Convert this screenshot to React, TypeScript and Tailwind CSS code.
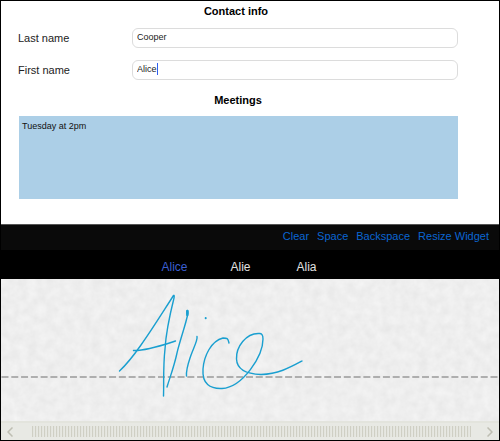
import { useState } from "react";

const font = "font-['Liberation_Sans',Arial,sans-serif]";
const actions = ["Clear", "Space", "Backspace", "Resize Widget"];
const candidates = ["Alice", "Alie", "Alia"];

function Field({ id, label, value, onChange, caret }: {
  id: string; label: string; value: string; onChange: (v: string) => void; caret?: boolean;
}) {
  return (
    <div className="flex h-5 items-center">
      <label htmlFor={id} className="w-[114px] shrink-0 text-[11px] leading-4 text-[#222]">{label}</label>
      <div className="relative h-5 min-w-0 flex-1">
        <input
          id={id}
          value={value}
          onChange={(e) => onChange(e.target.value)}
          className="block h-5 w-full rounded-[6px] border border-[#dcdcdc] bg-white px-1 pb-0.5 text-[9px] text-[#222] outline-none"
        />
        {caret && (
          <span className="pointer-events-none absolute left-[5px] top-[3px] flex h-3 text-[9px]">
            <span className="invisible">{value}</span>
            <span className="w-px bg-[#2f5ff0]" />
          </span>
        )}
      </div>
    </div>
  );
}

function Ink() {
  return (
    <svg viewBox="0 0 498 142" className="block h-[142px] w-full" role="img" aria-label="Handwritten Alice" preserveAspectRatio="xMidYMid slice">
      <filter id="paper" x="0" y="0" width="100%" height="100%" colorInterpolationFilters="sRGB">
        <feTurbulence type="fractalNoise" baseFrequency="0.11" numOctaves="3" seed="4" />
        <feColorMatrix values="0.06 0 0 0 0.904  0.06 0 0 0 0.904  0.06 0 0 0 0.904  0 0 0 0 1" />
      </filter>
      <rect width="498" height="142" fill="#eeeeee" filter="url(#paper)" />
      <path d="M0.5 98H498" stroke="#999" strokeWidth="1.5" strokeDasharray="7 2.78" />
      <g transform="translate(-1 -279)" fill="none" stroke="#199fd0" strokeWidth="1.4" strokeLinecap="round" strokeLinejoin="round">
        <path d="M119.500 371C127 364 134 355 141 345C151 331 161 315 170 301L173.500 295.500Q174.600 295 174 298C170 314 166 332 165 349C163 367 164 382 163.500 396" />
        <path d="M133.500 350.500C146 351 163 345 175.500 341" />
        <path d="M187 314V311.500Q188 309 188 313C186 324 180 340 177 353C174 367 170 377 167 387" />
        <path d="M187.300 311V315" strokeWidth="2.4" />
        <path d="M197 336.500C198 340 193 349 190 358Q186 370 186.500 376" />
        <path d="M205.700 318V318.300" strokeWidth="2" />
        <path d="M229 343C228 338 227 338 223 338C211 341 204 356 203 369C202 384 210 389 222 388.500C243 387 263 356 263 339Q263 333 259 333.500C246 333 236 347 236.500 359C237 370 246 374 261 374.500C278 374 289 368 302 361" />
      </g>
    </svg>
  );
}

function Chevron({ right }: { right?: boolean }) {
  return (
    <svg viewBox="0 0 6 10" className="h-2.5 w-1.5" fill="none" stroke="#bebeb2" strokeWidth="1.5">
      <path d={right ? "M0.500 0.500L5 5L0.500 9.500" : "M5.500 0.500L1 5L5.500 9.500"} />
    </svg>
  );
}

export default function App() {
  const [last, setLast] = useState("Cooper");
  const [first, setFirst] = useState("Alice");
  const [pick, setPick] = useState("Alice");
  return (
    <main className={`border border-black bg-white ${font}`}>
      <form className="flex flex-col pb-[25px] pl-[17px] pr-[41px]" onSubmit={(e) => e.preventDefault()}>
        <h2 className="pt-0.5 pr-1 text-center text-[11px] font-bold leading-4 text-black">Contact info</h2>
        <div className="flex flex-col gap-3 pt-[9px]">
          <Field id="last" label="Last name" value={last} onChange={setLast} />
          <Field id="first" label="First name" value={first} onChange={setFirst} caret />
        </div>
        <h2 className="pt-3 text-center text-[11px] font-bold leading-4 text-black">Meetings</h2>
        <textarea aria-label="Meetings" defaultValue="Tuesday at 2pm" className="ml-px mt-2 block h-[83px] resize-none bg-[#accfe7] px-[3px] py-[3px] text-[9px] leading-[14px] text-[#111] outline-none" />
      </form>
      <nav className="flex h-[26px] items-center justify-end gap-2 border-t border-[#555] bg-[#0a0a0a] pb-[3px] pr-2.5 text-[11px] leading-4 text-[#0a66d2]">
        {actions.map((a) => <button key={a} type="button">{a}</button>)}
      </nav>
      <div className="flex h-[29px] items-center justify-center bg-black pb-px pr-[19px] pt-1.5 text-[12px] leading-4">
        {candidates.map((c) => (
          <button key={c} type="button" onClick={() => setPick(c)} className={`w-[66px] ${c === pick ? "text-[#3b5fd0]" : "text-[#e0e0e0]"}`}>{c}</button>
        ))}
      </div>
      <Ink />
      <div className="flex h-[19px] items-center border-t-2 border-[#e3e4dd] bg-[#e8e9e4] px-1.5">
        <button type="button" aria-label="Scroll left"><Chevron /></button>
        <div className="ml-[19px] mr-4 h-[11px] flex-1 bg-[repeating-linear-gradient(to_right,#cfcfc4_0px,#cfcfc4_1px,#e2e3dc_1px,#e8e9e4_3px)]" />
        <button type="button" aria-label="Scroll right"><Chevron right /></button>
      </div>
    </main>
  );
}
